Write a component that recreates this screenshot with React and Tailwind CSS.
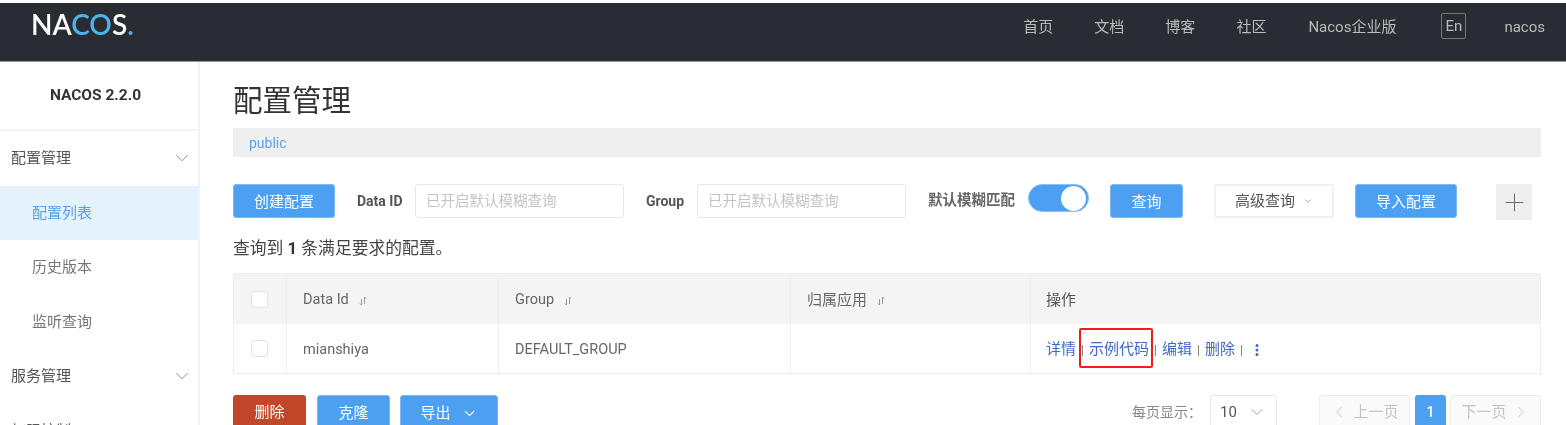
import React from 'react';
import { ChevronDown, ChevronLeft, ChevronRight, Plus } from 'lucide-react';

const cjk = 'font-["Roboto","Noto_Sans_CJK_SC",sans-serif]';

function SortIcon() {
  return (
    <svg width="8" height="10" viewBox="0 0 8 10" className="ml-2.5 mt-0.5 text-[#999]" fill="none" stroke="currentColor" strokeWidth="1">
      <path d="M5.5 1v7M5.5 1l1.5 1.5M2.5 3v6M2.5 9L1 7.5" />
    </svg>
  );
}

function Checkbox() {
  return <div className="w-[17px] h-[17px] rounded-[3px] border border-[#e2e2e2] bg-white" />;
}

function SideItem({ label, active }) {
  return (
    <div className={`h-[54.5px] shrink-0 flex items-center pl-[32px] text-[15px] ${active ? 'bg-[#e4f2fd] text-[#5a9fe8]' : 'text-[#777]'}`}>
      {label}
    </div>
  );
}

function SideGroup({ label }) {
  return (
    <div className="h-[54.5px] shrink-0 flex items-center justify-between pl-[11px] pr-[5px] text-[15px] text-[#555]">
      {label}
      <ChevronDown size={22} strokeWidth={0.9} className="text-[#777]" />
    </div>
  );
}

function BlueButton({ className, children }) {
  return (
    <button className={`h-[34px] pt-[2px] rounded-[3px] bg-[#4d9ff2] border border-[#7db8f5] text-white text-[15px] flex items-center justify-center ${className}`}>
      {children}
    </button>
  );
}

function SearchInput({ className }) {
  return (
    <div className={`h-[34px] pt-[2px] border border-[#e6e6e6] rounded-[3px] flex items-center pl-[10px] text-[14.5px] text-[#c4c4c4] ${className}`}>
      已开启默认模糊查询
    </div>
  );
}

function Sep() {
  return <span className="w-[13px] text-center text-[#777] text-[12px]">|</span>;
}

export default function App() {
  return (
    <div className={`h-[425px] w-[1566px] overflow-hidden bg-white pt-[3px] blur-[0.5px] ${cjk}`}>
      <header className="h-[59px] bg-[#292c33] border-b border-[#999] flex items-start justify-between pr-[21px]">
        <div className="ml-[31px] mt-[2px] text-[28px] leading-[38px] font-semibold text-white font-['Lato',sans-serif]">
          NA<span className="text-[#4db3e8]">CO</span>S<span className="text-[#4db3e8]">.</span>
        </div>
        <nav className="flex items-center text-[15px] text-[#bbb] mt-[10px] h-[26px]">
          <span className="pt-[2px]">首页</span>
          <span className="pt-[2px] ml-[41px]">文档</span>
          <span className="pt-[2px] ml-[41px]">博客</span>
          <span className="pt-[2px] ml-[41px]">社区</span>
          <span className="pt-[2px] ml-[42px]">Nacos企业版</span>
          <span className="ml-[45px] w-[25px] h-[26px] border border-[#777] rounded-[2px] flex items-center justify-center">En</span>
          <span className="pt-[2px] ml-[38px]">nacos</span>
        </nav>
      </header>

      <div className="flex h-[363px]">
        <aside className="w-[200px] shrink-0 border-r-2 border-[#f2f2f2] flex flex-col">
          <div className="h-[69px] shrink-0 pr-[7px] border-b-2 border-[#f4f4f4] flex items-center justify-center text-[15.5px] font-bold text-[#333]">
            NACOS 2.2.0
          </div>
          <SideGroup label="配置管理" />
          <SideItem label="配置列表" active />
          <SideItem label="历史版本" />
          <SideItem label="监听查询" />
          <SideGroup label="服务管理" />
          <SideGroup label="权限控制" />
        </aside>

        <main className="w-[1308px] ml-[33px] shrink-0">
          <h1 className="h-[66px] pt-[20px] text-[29.5px] leading-[38px] text-[#333]">配置管理</h1>
          <div className="h-[29px] pt-[2px] bg-[#efefef] flex items-center pl-[16px] text-[14px] text-[#5b9ff0]">public</div>

          <div className="mt-[27px] h-[36px] flex items-start">
            <BlueButton className="w-[102px]">创建配置</BlueButton>
            <span className="ml-[22px] w-[58px] h-[34px] leading-[34px] text-[14px] font-bold text-[#555]">Data ID</span>
            <SearchInput className="w-[209px]" />
            <span className="ml-[22px] w-[51px] h-[34px] leading-[34px] text-[14px] font-bold text-[#555]">Group</span>
            <SearchInput className="w-[209px]" />
            <span className="ml-[22px] w-[87px] h-[34px] leading-[34px] text-[14.5px] font-bold text-[#666] whitespace-nowrap">默认模糊匹配</span>
            <div className="ml-[13px] w-[61px] h-[28px] rounded-full bg-[#4d9ff2] border border-[#8cc0f6] flex items-center justify-end pr-[2px]">
              <div className="w-[25px] h-[25px] rounded-full bg-white" />
            </div>
            <BlueButton className="ml-[21px] w-[73px]">查询</BlueButton>
            <button className="ml-[31px] w-[120px] h-[34px] border-2 border-[#f0f0f0] rounded-[3px] flex items-center justify-center gap-[8px] text-[15px] text-[#555]">
              高级查询
              <ChevronDown size={10} className="text-[#999]" />
            </button>
            <BlueButton className="ml-[21px] w-[102px]">导入配置</BlueButton>
            <div className="ml-[39px] w-[36px] h-[36px] bg-[#efefef] flex items-center justify-center text-[#666]">
              <Plus size={29} strokeWidth={0.8} />
            </div>
          </div>

          <p className="mt-[17px] h-[22px] leading-[22px] text-[16.8px] text-[#444]">
            查询到 <b className="text-[#333]">1</b> 条满足要求的配置。
          </p>

          <div className="mt-[14px] w-[1308px] border border-[#eee] grid grid-cols-[53px_212px_292px_240px_1fr] text-[14.5px] text-[#666]">
            <div className="h-[50px] bg-[#f4f4f4] border-r border-[#eee] flex items-center justify-center pr-px"><Checkbox /></div>
            <div className="h-[50px] pt-[2px] bg-[#f4f4f4] border-r border-[#eee] flex items-center pl-[16px]">Data Id<SortIcon /></div>
            <div className="h-[50px] pt-[2px] bg-[#f4f4f4] border-r border-[#eee] flex items-center pl-[16px]">Group<SortIcon /></div>
            <div className="h-[50px] pt-[2px] bg-[#f4f4f4] border-r border-[#eee] flex items-center pl-[16px] text-[15px]">归属应用<SortIcon /></div>
            <div className="h-[50px] pt-[2px] bg-[#f4f4f4] flex items-center pl-[15px] text-[15px] text-[#555]">操作</div>

            <div className="h-[49px] border-r border-[#eee] flex items-center justify-center pr-px"><Checkbox /></div>
            <div className="h-[49px] pt-[2px] border-r border-[#eee] flex items-center pl-[16px]">mianshiya</div>
            <div className="h-[49px] pt-[2px] border-r border-[#eee] flex items-center pl-[16px]">DEFAULT_GROUP</div>
            <div className="h-[49px] border-r border-[#eee]" />
            <div className="relative h-[49px] pt-[2px] flex items-center pl-[15px] text-[15px] text-[#3f69c6]">
              <span>详情</span>
              <Sep />
              <span>示例代码</span>
              <Sep />
              <span>编辑</span>
              <Sep />
              <span>删除</span>
              <Sep />
              <svg width="4" height="14" viewBox="0 0 4 14" className="ml-[7px] fill-[#3f69c6]">
                <circle cx="2" cy="2.5" r="1.5" />
                <circle cx="2" cy="7" r="1.5" />
                <circle cx="2" cy="11.5" r="1.5" />
              </svg>
              <div className="absolute left-[48px] top-[4px] w-[74px] h-[40px] border-2 border-[#f01c1c] rounded-[2px]" />
            </div>
          </div>

          <div className="mt-[21px] flex items-start">
            <button className="w-[73px] h-[34px] rounded-[3px] bg-[#c2472a] text-white text-[15px]">删除</button>
            <BlueButton className="ml-[11px] w-[73px]">克隆</BlueButton>
            <BlueButton className="ml-[10px] w-[98px] gap-[10px]">导出<ChevronDown size={17} strokeWidth={1.5} /></BlueButton>
            <span className="ml-[634px] mt-[7px] text-[14px] text-[#888]">每页显示：</span>
            <div className="ml-[8px] w-[67px] h-[34px] border border-[#e6e6e6] rounded-[3px] flex items-center justify-between pl-[9px] pr-[9px] text-[15px] text-[#555]">
              10
              <ChevronDown size={20} strokeWidth={1} className="text-[#888]" />
            </div>
            <div className="ml-[42px] w-[91px] h-[34px] border border-[#eee] bg-[#fafafa] rounded-[3px] flex items-center justify-center gap-[5px] text-[15px] text-[#c4c4c4]">
              <ChevronLeft size={18} strokeWidth={1.2} />上一页
            </div>
            <div className="ml-[5px] w-[31px] h-[34px] bg-[#4d9ff2] rounded-[3px] flex items-center justify-center text-[14px] font-medium text-white">1</div>
            <div className="ml-[4px] w-[91px] h-[34px] border border-[#eee] bg-[#fafafa] rounded-[3px] flex items-center justify-center gap-[5px] text-[15px] text-[#c4c4c4]">
              下一页<ChevronRight size={18} strokeWidth={1.2} />
            </div>
          </div>
        </main>
      </div>
    </div>
  );
}
